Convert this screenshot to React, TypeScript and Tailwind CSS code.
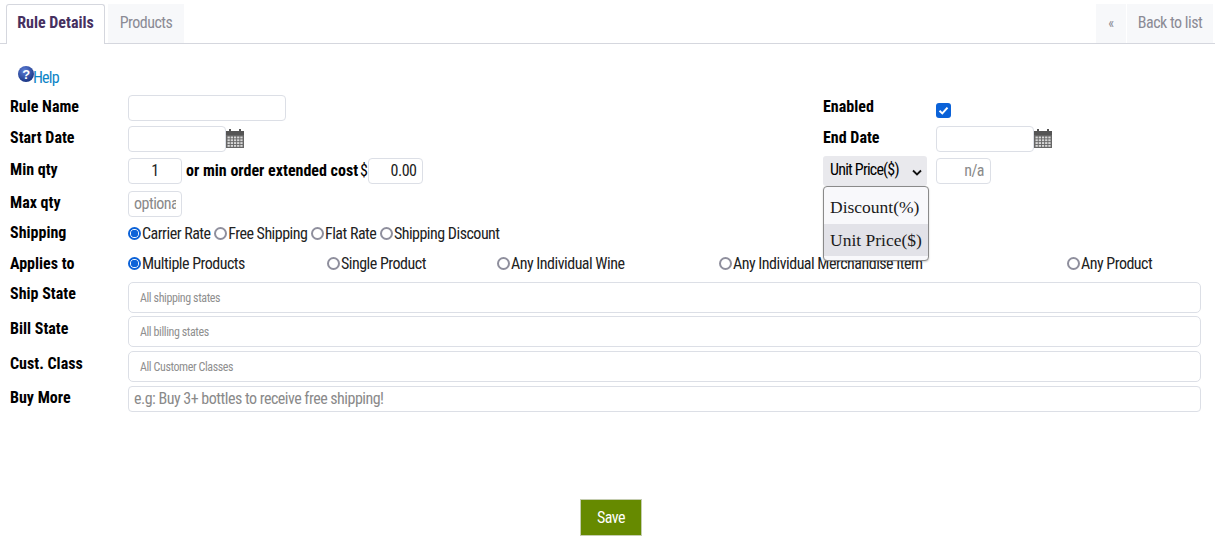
import * as React from "react";

const inputCls =
  "border border-[#dcdfe6] rounded-[4px] bg-white outline-none text-[#222] placeholder:text-[#8a8a8a]";

const Label = ({ children, cls = "w-[118px] pt-px" }: { children: React.ReactNode; cls?: string }) => (
  <div className={`${cls} shrink-0 font-bold tracking-normal text-[16px] leading-[22px] text-black`}>{children}</div>
);

const CalendarIcon = () => (
  <svg width="18" height="19" viewBox="0 0 18 19" className="shrink-0 mt-[3px]">
    <rect x="3" y="0" width="2" height="3" fill="#555" />
    <rect x="13" y="0" width="2" height="3" fill="#555" />
    <rect x="0" y="2" width="18" height="4" fill="#555" />
    <rect x="0" y="6" width="18" height="13" fill="#666" />
    {[0, 1, 2, 3].map((r) =>
      [0, 1, 2, 3, 4].map((c) => (
        <rect key={`${r}-${c}`} x={1.5 + c * 3.2} y={7.5 + r * 2.8} width="2.3" height="1.9" fill="#d8d8d8" />
      ))
    )}
  </svg>
);

const HelpIcon = () => (
  <svg width="16" height="16" viewBox="0 0 16 16" className="shrink-0">
    <defs>
      <radialGradient id="helpBall" cx="40%" cy="30%" r="75%">
        <stop offset="0%" stopColor="#5f7fd8" />
        <stop offset="100%" stopColor="#14307f" />
      </radialGradient>
    </defs>
    <circle cx="8" cy="8" r="8" fill="url(#helpBall)" />
    <text x="8" y="12.5" textAnchor="middle" fontSize="13" fontWeight="700" fill="#fff" fontFamily="Liberation Sans, sans-serif">
      ?
    </text>
  </svg>
);

const Radio = ({ label, checked, w, name }: { label: string; checked?: boolean; w?: string; name: string }) => (
  <label className={`flex items-center ${w ?? ""}`}>
    <input
      type="radio"
      name={name}
      defaultChecked={checked}
      className="appearance-none m-0 w-[13px] h-[13px] shrink-0 rounded-full border-2 border-[#8f8f9d] checked:border-[#0b62d8] checked:bg-[radial-gradient(circle,#0b62d8_0,#0b62d8_3.5px,#fff_4px)]"
    />
    <span className="ml-px text-[16px] leading-[22px] text-[#222] whitespace-nowrap pt-px">{label}</span>
  </label>
);

const StateRow = ({ label, text, mt, labelCls }: { label: string; text: string; mt: string; labelCls: string }) => (
  <div className={`flex ${mt}`}>
    <Label cls={labelCls}>{label}</Label>
    <div className="flex-1 h-[31px] border border-[#dcdfe6] rounded-[5px] pl-[11px] flex items-center text-[12px] tracking-[-0.4px] text-[#8f8f8f]">
      {text}
    </div>
  </div>
);

export default function App() {
  return (
    <div className="w-[1215px] h-[541px] overflow-hidden bg-white [font-family:Roboto,sans-serif] [font-stretch:75%] tracking-[-0.5px]">
      <div className="h-[44px] pt-[4px] pl-[6px] flex border-b border-[#d5d7de]">
        <div className="w-[99px] h-[40px] pb-[3px] bg-white border border-b-0 border-[#d5d7de] rounded-t-[3px] flex items-center justify-center font-bold tracking-normal text-[16px] text-[#46305f]">
          Rule Details
        </div>
        <div className="w-[76px] h-[39px] pb-[2px] ml-[3px] bg-[#f7f8fa] flex items-center justify-center text-[16px] text-[#8b8b95]">
          Products
        </div>
        <div className="ml-auto flex h-[39px] mr-[2px]">
          <div className="w-[30px] bg-[#f7f8fa] flex items-center justify-center text-[14px] text-[#8b8b95]">«</div>
          <div className="w-[86px] pb-[2px] ml-px bg-[#f7f8fa] flex items-center justify-center text-[16px] text-[#8b8b95]">
            Back to list
          </div>
        </div>
      </div>

      <div className="pl-[10px] pr-[14px]">
        <div className="h-[51px] pl-[8px] pt-[22px] flex items-start">
          <HelpIcon />
          <a className="-ml-px text-[16px] leading-[22px] tracking-[-0.8px] text-[#0b84c6] mt-px">Help</a>
        </div>

        <div className="flex">
          <div className="w-[813px] shrink-0">
            <div className="flex">
              <Label>Rule Name</Label>
              <input className={`${inputCls} w-[158px] h-[26px]`} />
            </div>
            <div className="flex mt-[5px]">
              <Label>Start Date</Label>
              <input className={`${inputCls} w-[98px] h-[26px]`} />
              <CalendarIcon />
            </div>
            <div className="flex mt-[6px]">
              <Label>Min qty</Label>
              <input
                defaultValue="1"
                className={`${inputCls} w-[54px] h-[26px] pb-[2px] text-center text-[16px]`}
              />
              <div className="ml-[4px] font-bold tracking-normal text-[16px] leading-[26px] text-black">or min order extended cost</div>
              <div className="ml-[2px] text-[16px] leading-[26px] text-black">$</div>
              <input
                defaultValue="0.00"
                className={`${inputCls} w-[55px] h-[26px] pb-[2px] text-right pr-[5px] text-[16px]`}
              />
            </div>
            <div className="flex mt-[7px]">
              <Label>Max qty</Label>
              <input
                placeholder="optional"
                className={`${inputCls} w-[54px] h-[26px] pb-[2px] pl-[5px] pr-[5px] text-[16px]`}
              />
            </div>
          </div>

          <div className="flex-1">
            <div className="flex h-[26px]">
              <Label cls="w-[113px] pt-px">Enabled</Label>
              <div className="w-[15px] h-[15px] mt-[8px] rounded-[3px] bg-[#0b62d8] flex items-center justify-center">
                <svg width="11" height="11" viewBox="0 0 11 11">
                  <path d="M1.5 5.8 L4.3 8.4 L9.5 2.6" fill="none" stroke="#fff" strokeWidth="2" />
                </svg>
              </div>
            </div>
            <div className="flex mt-[5px]">
              <Label cls="w-[113px] pt-px">End Date</Label>
              <input className={`${inputCls} w-[98px] h-[26px]`} />
              <CalendarIcon />
            </div>
            <div className="flex mt-[4px] relative">
              <div className="w-[104px] h-[30px] pb-[3px] bg-[#e9e9ed] rounded-[3px] flex items-center pl-[7px] text-[16px] tracking-[-0.8px] text-black whitespace-nowrap">
                <span>Unit Price($)</span>
                <svg width="10" height="7" viewBox="0 0 10 7" className="ml-[13px] mt-[5px]">
                  <path d="M1 1.5 L5 5.5 L9 1.5" fill="none" stroke="#111" strokeWidth="1.8" />
                </svg>
              </div>
              <input
                placeholder="n/a"
                className={`${inputCls} w-[55px] h-[26px] pb-[2px] ml-[9px] mt-[2px] text-right pr-[6px] text-[16px]`}
              />
              <div className="absolute z-10 left-0 top-[30px] w-[106px] h-[75px] bg-[#f8f8fb] border border-[#8a8a8a] rounded-[4px] overflow-hidden [font-family:'Liberation_Serif',serif] [font-stretch:normal] tracking-normal text-[17.5px] text-[#1b1b1b] shadow-[0_1px_2px_rgba(0,0,0,0.2)]">
                <div className="h-[37px] pt-[3px] pl-[6px] flex items-center">Discount(%)</div>
                <div className="h-[32px] bg-[#e2e2e8] pl-[6px] flex items-center whitespace-nowrap">Unit Price($)</div>
              </div>
            </div>
          </div>
        </div>

        <div className="flex mt-[5px] h-[22px] items-center">
          <Label cls="w-[118px]">Shipping</Label>
          <div className="flex gap-[3.6px]">
            <Radio name="shipping" label="Carrier Rate" checked />
            <Radio name="shipping" label="Free Shipping" />
            <Radio name="shipping" label="Flat Rate" />
            <Radio name="shipping" label="Shipping Discount" />
          </div>
        </div>
        <div className="flex mt-[8px] h-[22px] items-center">
          <Label cls="w-[118px] pt-[2px]">Applies to</Label>
          <div className="flex">
            <Radio name="applies" label="Multiple Products" checked w="w-[199px]" />
            <Radio name="applies" label="Single Product" w="w-[170px]" />
            <Radio name="applies" label="Any Individual Wine" w="w-[222px]" />
            <Radio name="applies" label="Any Individual Merchandise Item" w="w-[348px]" />
            <Radio name="applies" label="Any Product" />
          </div>
        </div>

        <StateRow label="Ship State" text="All shipping states" mt="mt-[8px]" labelCls="w-[118px] pt-px" />
        <StateRow label="Bill State" text="All billing states" mt="mt-[3px]" labelCls="w-[118px] pt-[2px]" />
        <StateRow label="Cust. Class" text="All Customer Classes" mt="mt-[4px]" labelCls="w-[118px] pt-[2px]" />
        <div className="flex mt-[4px]">
          <Label>Buy More</Label>
          <input
            placeholder="e.g: Buy 3+ bottles to receive free shipping!"
            className={`${inputCls} flex-1 h-[26px] pb-[2px] pl-[5px] text-[16px]`}
          />
        </div>

        <div className="flex justify-center mt-[87px] pl-[11px]">
          <button className="w-[62px] h-[37px] bg-[#668a00] border border-[#c5cdb0] text-white text-[16px]">Save</button>
        </div>
      </div>
    </div>
  );
}
